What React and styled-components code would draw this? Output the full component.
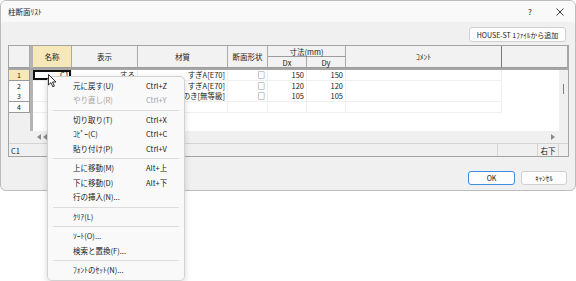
import styled, { createGlobalStyle } from "styled-components";

const GlobalStyle = createGlobalStyle`
  body {
    margin: 0;
    background: #ffffff;
    font-family: "Noto Sans CJK JP", "Noto Sans", sans-serif;
    font-size: 7.5px;
    color: #1a1a1a;
  }
`;

const COLS = "21px 3px 39px 66px 90px 40px 39px 39px 156px 1fr";

const Page = styled.div`
  position: relative;
  width: 576px;
  height: 281px;
  overflow: hidden;
`;

const Dialog = styled.div`
  box-sizing: border-box;
  width: 576px;
  height: 191px;
  border: 1px solid #bcbcbc;
  border-radius: 6px;
  background: #f0f0f0;
  display: flex;
  flex-direction: column;
  overflow: hidden;
`;

const TitleBar = styled.div`
  height: 21px;
  display: flex;
  align-items: center;
  background: #f9f9f9;
`;

const Title = styled.div`
  flex: 1;
  padding-left: 7px;
  font-size: 7.5px;
`;

const TitleButton = styled.div`
  width: 30px;
  display: flex;
  justify-content: center;
  align-items: center;
  font-size: 8px;
`;

const Toolbar = styled.div`
  display: flex;
  justify-content: flex-end;
  padding: 5px 9px 3px 0;
`;

const Button = styled.button`
  box-sizing: border-box;
  height: ${(p) => p.$h || 14}px;
  width: ${(p) => p.$w}px;
  padding: 0;
  font-family: inherit;
  font-size: 7px;
  color: #1a1a1a;
  background: #fdfdfd;
  border: 1px solid ${(p) => (p.$primary ? "#3d8ee0" : "#d0d0d0")};
  border-radius: 3px;
`;

const Grid = styled.div`
  margin: 0 6px 0 7px;
  height: 112px;
  box-sizing: border-box;
  border: 1px solid #a4a4a4;
  display: flex;
  flex-direction: column;
  background: #f0f0f0;
`;

const HeaderGrid = styled.div`
  display: grid;
  grid-template-columns: ${COLS};
  grid-template-rows: 11px 11px;
  height: 22px;
`;

const HeadCell = styled.div`
  grid-row: ${(p) => p.$row || "1 / span 2"};
  grid-column: ${(p) => p.$col};
  display: flex;
  align-items: center;
  justify-content: center;
  box-sizing: border-box;
  border-right: 1px solid ${(p) => (p.$dark ? "#7a7a7a" : "#a8a8a8")};
  border-bottom: 1px solid #9c9c9c;
  background: ${(p) => (p.$active ? "#f6e8b8" : "#f2f2f2")};
  font-size: 7.5px;
  white-space: nowrap;
`;

const HeadDivider = styled.div`
  grid-row: 1 / span 2;
  grid-column: 2;
  background: #b4b4b4;
`;

const HeaderRule = styled.div`
  height: 2px;
  background: #a6a6a6;
`;

const Body = styled.div`
  height: 61px;
  display: flex;
`;

const RowsArea = styled.div`
  flex: 1;
  background: linear-gradient(
    to right,
    #f0f0f0 0 21px,
    #b4b4b4 21px 24px,
    #ffffff 24px
  );
`;

const Row = styled.div`
  display: grid;
  grid-template-columns: ${COLS};
  height: 10.5px;
`;

const RowHead = styled.div`
  box-sizing: border-box;
  border-right: 1px solid #9a9a9a;
  border-bottom: 1px solid #9a9a9a;
  background: ${(p) => (p.$active ? "#f6e8b8" : "#fbfbfb")};
  text-align: center;
  line-height: 10px;
  font-size: 7px;
`;

const Divider = styled.div`
  background: #b4b4b4;
`;

const Cell = styled.div`
  position: relative;
  box-sizing: border-box;
  border-right: 1px solid ${(p) => (p.$blank ? "transparent" : "#efefef")};
  border-bottom: 1px solid ${(p) => (p.$blank ? "transparent" : "#efefef")};
  background: #fff;
  text-align: right;
  padding-right: 2px;
  line-height: 10px;
  font-size: 7.5px;
  white-space: nowrap;
  overflow: hidden;
`;

const CurrentMark = styled.div`
  position: absolute;
  inset: 0;
  border: 2px solid #111;
`;

const VScroll = styled.div`
  width: 9px;
  background: #f0f0f0;
  display: flex;
  justify-content: center;
  padding-top: 14px;
  box-sizing: border-box;
`;

const Thumb = styled.div`
  width: 1px;
  height: 10px;
  background: #7c7c7c;
`;

const HScroll = styled.div`
  height: 12px;
  display: flex;
  align-items: center;
  padding: 0 13px 0 28px;
  background: #f0f0f0;
  gap: 2px;
`;

const Spacer = styled.div`
  flex: 1;
`;

const StatusBar = styled.div`
  height: 13px;
  display: flex;
  border-top: 1px solid #d4d4d4;
  box-sizing: border-box;
  font-size: 7.5px;
`;

const StatusCell = styled.div`
  width: ${(p) => (p.$w ? `${p.$w}px` : "auto")};
  flex: ${(p) => (p.$w ? "none" : 1)};
  border-left: 1px solid ${(p) => (p.$first ? "transparent" : "#d4d4d4")};
  box-sizing: border-box;
  display: flex;
  align-items: center;
  justify-content: ${(p) => (p.$first ? "flex-start" : "center")};
  padding-left: ${(p) => (p.$first ? "1px" : 0)};
`;

const Footer = styled.div`
  display: flex;
  justify-content: flex-end;
  gap: 6px;
  padding: 14px 8px 0 0;
`;

const Menu = styled.div`
  position: absolute;
  left: 47px;
  top: 76px;
  width: 138px;
  box-sizing: border-box;
  padding: 2px 0;
  background: #f9f9f9;
  border: 1px solid #d2d2d2;
  border-radius: 5px;
  box-shadow: 0 2px 6px rgba(0, 0, 0, 0.16);
`;

const MenuItem = styled.div`
  display: grid;
  grid-template-columns: 73px 1fr;
  padding-left: 25px;
  height: 14.4px;
  line-height: 14.4px;
  font-size: 7.5px;
  color: ${(p) => (p.$disabled ? "#a2a2a2" : "#1a1a1a")};
  white-space: nowrap;
`;

const MenuSeparator = styled.div`
  height: 5.2px;
  display: flex;
  align-items: center;
  padding: 0 5px;

  &::after {
    content: "";
    flex: 1;
    height: 1px;
    background: #dcdcdc;
  }
`;

const Cursor = styled.svg`
  position: absolute;
  left: 48px;
  top: 74px;
`;

const Arrow = ({ dir }) => (
  <svg width="4" height="6" viewBox="0 0 4 6">
    <path d={dir === "left" ? "M4 0 L0 3 L4 6 Z" : "M0 0 L4 3 L0 6 Z"} fill="#8a8a8a" />
  </svg>
);

const rows = [
  { n: "1", name: "C1", show: "する", mat: "すぎA[E70]", dx: "150", dy: "150" },
  { n: "2", name: "", show: "", mat: "すぎA[E70]", dx: "120", dy: "120" },
  { n: "3", name: "", show: "", mat: "ひのき[無等級]", dx: "105", dy: "105" },
  { n: "4", name: "", show: "", mat: "", dx: "", dy: "", empty: true },
];

const menu = [
  { label: "元に戻す(U)", key: "Ctrl+Z" },
  { label: "やり直し(R)", key: "Ctrl+Y", disabled: true },
  "sep",
  { label: "切り取り(T)", key: "Ctrl+X" },
  { label: "ｺﾋﾟｰ(C)", key: "Ctrl+C" },
  { label: "貼り付け(P)", key: "Ctrl+V" },
  "sep",
  { label: "上に移動(M)", key: "Alt+上" },
  { label: "下に移動(D)", key: "Alt+下" },
  { label: "行の挿入(N)...", key: "" },
  "sep",
  { label: "ｸﾘｱ(L)", key: "" },
  "sep",
  { label: "ｿｰﾄ(O)...", key: "" },
  { label: "検索と置換(F)...", key: "" },
  "sep",
  { label: "ﾌｫﾝﾄのｾｯﾄ(N)...", key: "" },
];

const App = () => {
  return (
    <Page>
      <GlobalStyle />
      <Dialog>
        <TitleBar>
          <Title>柱断面ﾘｽﾄ</Title>
          <TitleButton>?</TitleButton>
          <TitleButton>
            <svg width="8" height="8" viewBox="0 0 8 8">
              <path d="M0.5 0.5 L7.5 7.5 M7.5 0.5 L0.5 7.5" stroke="#222" strokeWidth="0.9" />
            </svg>
          </TitleButton>
        </TitleBar>

        <Toolbar>
          <Button $w={97} $h={15}>HOUSE-ST 1ﾌｧｲﾙから追加</Button>
        </Toolbar>

        <Grid>
          <HeaderGrid>
            <HeadCell $col="1" />
            <HeadDivider />
            <HeadCell $col="3" $active>名称</HeadCell>
            <HeadCell $col="4">表示</HeadCell>
            <HeadCell $col="5">材質</HeadCell>
            <HeadCell $col="6">断面形状</HeadCell>
            <HeadCell $row="1" $col="7 / span 2">寸法(mm)</HeadCell>
            <HeadCell $row="2" $col="7">Dx</HeadCell>
            <HeadCell $row="2" $col="8">Dy</HeadCell>
            <HeadCell $col="9" $dark>ｺﾒﾝﾄ</HeadCell>
            <HeadCell $col="10" />
          </HeaderGrid>
          <HeaderRule />

          <Body>
            <RowsArea>
              {rows.map((r) => (
                <Row key={r.n}>
                  <RowHead $active={r.n === "1"}>{r.n}</RowHead>
                  <Divider />
                  <Cell>
                    {r.name}
                    {r.n === "1" && <CurrentMark />}
                  </Cell>
                  <Cell>{r.show}</Cell>
                  <Cell>{r.mat}</Cell>
                  <Cell>{r.empty ? "" : "□"}</Cell>
                  <Cell>{r.dx}</Cell>
                  <Cell>{r.dy}</Cell>
                  <Cell />
                  <Cell $blank />
                </Row>
              ))}
            </RowsArea>
            <VScroll>
              <Thumb />
            </VScroll>
          </Body>

          <HScroll>
            <Arrow dir="left" />
            <Arrow dir="left" />
            <Spacer />
            <Arrow dir="right" />
          </HScroll>

          <StatusBar>
            <StatusCell $first>C1</StatusCell>
            <StatusCell $w={40} />
            <StatusCell $w={21}>右下</StatusCell>
            <StatusCell $w={10} />
          </StatusBar>
        </Grid>

        <Footer>
          <Button $w={47} $primary>OK</Button>
          <Button $w={46}>ｷｬﾝｾﾙ</Button>
        </Footer>
      </Dialog>

      <Menu>
        {menu.map((m, i) =>
          m === "sep" ? (
            <MenuSeparator key={i} />
          ) : (
            <MenuItem key={i} $disabled={m.disabled}>
              <span>{m.label}</span>
              <span>{m.key}</span>
            </MenuItem>
          )
        )}
      </Menu>

      <Cursor width="9" height="14" viewBox="0 0 9 14">
        <path
          d="M0.5 0.5 L0.5 11 L3 8.6 L4.8 12.8 L6.4 12.1 L4.6 8 L8 8 Z"
          fill="#fff"
          stroke="#000"
          strokeWidth="0.8"
          strokeLinejoin="round"
        />
      </Cursor>
    </Page>
  );
};

export default App;
